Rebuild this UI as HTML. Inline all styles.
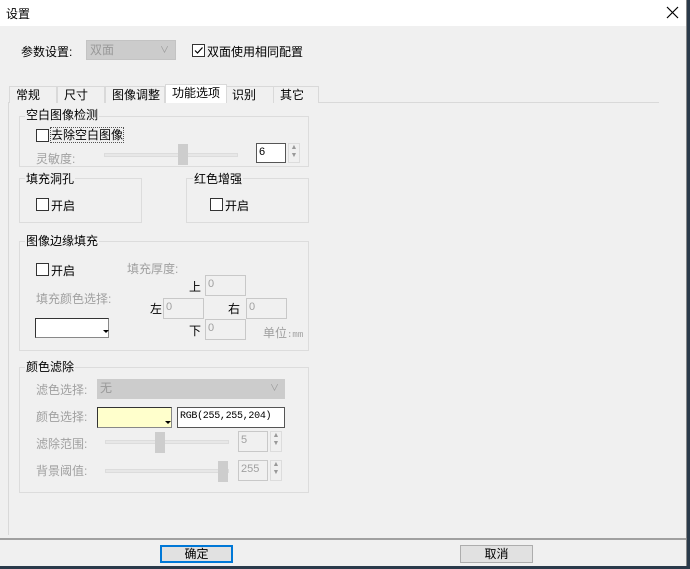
<!DOCTYPE html>
<html><head><meta charset="utf-8"><style>
*{box-sizing:border-box}
body{margin:0;width:690px;height:569px;background:#2a3a4a;font-family:"Liberation Sans","Noto Sans CJK SC",sans-serif;font-size:12px;color:#000;position:relative;overflow:hidden}
.a{position:absolute}
.win{left:0;top:0;width:687px;height:566px;background:#f0f0f0;border-right:1px solid #888}
.title{left:0;top:0;width:686px;height:26px;background:#fff}
.gb{position:absolute;border:1px solid #dcdcdc}
.gl{position:absolute;background:#f0f0f0;padding:0 1px;line-height:14px}
.cb{position:absolute;width:13px;height:13px;border:1px solid #333;background:#fff}
.dis{color:#a0a0a0}
.inp{position:absolute;border:1px solid #c8c8c8;background:#f0f0f0;color:#a0a0a0;font-size:11px;padding-left:2px;line-height:16px}
.tab{position:absolute;top:86px;height:17px;border:1px solid #d9d9d9;border-bottom:none;background:#f0f0f0;text-align:left;padding-left:6px;line-height:16px;font-size:12px}
.track{position:absolute;height:4px;border:1px solid #dcdcdc;background:#e7e7e7}
.thumb{position:absolute;width:10px;height:21px;background:#cdcdcd}
.spin{position:absolute;width:12px;border:1px solid #dcdcdc;background:#f0f0f0;font-size:7px;color:#999;text-align:center;line-height:8px}
.btn{position:absolute;top:545px;height:18px;border:1px solid #adadad;background:#e1e1e1;text-align:center;line-height:16px}
</style></head><body>
<div class="a win"></div>
<div class="a title"></div>
<div class="a" style="left:6px;top:5px;font-size:12px">设置</div>
<svg class="a" style="left:666px;top:6px" width="13" height="13"><path d="M1 1L12 12M12 1L1 12" stroke="#000" stroke-width="1.2"/></svg>

<div class="a" style="left:21px;top:43px">参数设置:</div>
<div class="a" style="left:86px;top:40px;width:90px;height:20px;background:#ccc;border:1px solid #c3c3c3;color:#999;padding-left:3px;line-height:18px">双面<span style="position:absolute;right:6px;top:0;font-size:9px">∨</span></div>
<div class="cb" style="left:192px;top:44px"></div>
<svg class="a" style="left:193px;top:45px" width="11" height="11"><path d="M2 5.5L4.5 8L9.5 2.5" stroke="#000" fill="none" stroke-width="1.2"/></svg>
<div class="a" style="left:207px;top:43px">双面使用相同配置</div>

<!-- tabs -->
<div class="a" style="left:8px;top:102px;width:651px;height:1px;background:#d9d9d9"></div>
<div class="a" style="left:8px;top:102px;width:1px;height:433px;background:#d9d9d9"></div>
<div class="tab" style="left:9px;width:48px">常规</div>
<div class="tab" style="left:57px;width:48px">尺寸</div>
<div class="tab" style="left:105px;width:60px">图像调整</div>
<div class="tab" style="left:226px;width:48px;padding-left:5px">识别</div>
<div class="tab" style="left:273px;width:46px">其它</div>
<div class="tab" style="left:165px;top:84px;height:19px;width:62px;background:#fff;line-height:17px">功能选项</div>

<!-- 空白图像检测 -->
<div class="gb" style="left:19px;top:116px;width:290px;height:51px"></div>
<div class="gl" style="left:25px;top:108px">空白图像检测</div>
<div class="cb" style="left:36px;top:129px"></div>
<div class="a" style="left:51px;top:128px;outline:1px dotted #555;line-height:14px">去除空白图像</div>
<div class="a dis" style="left:36px;top:150px">灵敏度:</div>
<div class="track" style="left:104px;top:153px;width:134px"></div>
<div class="thumb" style="left:178px;top:144px"></div>
<div class="a" style="left:256px;top:143px;width:30px;height:20px;border:1px solid #555;background:#fff;font-size:11px;padding-left:2px;line-height:17px">6</div>
<div class="spin" style="left:288px;top:143px;height:20px">▲<br>▼</div>

<!-- 填充洞孔 -->
<div class="gb" style="left:19px;top:178px;width:123px;height:45px"></div>
<div class="gl" style="left:25px;top:172px">填充洞孔</div>
<div class="cb" style="left:36px;top:198px"></div>
<div class="a" style="left:51px;top:197px">开启</div>
<div class="gb" style="left:186px;top:178px;width:123px;height:45px"></div>
<div class="gl" style="left:193px;top:172px">红色增强</div>
<div class="cb" style="left:210px;top:198px"></div>
<div class="a" style="left:225px;top:197px">开启</div>

<!-- 图像边缘填充 -->
<div class="gb" style="left:19px;top:241px;width:290px;height:110px"></div>
<div class="gl" style="left:25px;top:234px">图像边缘填充</div>
<div class="cb" style="left:36px;top:263px"></div>
<div class="a" style="left:51px;top:262px">开启</div>
<div class="a dis" style="left:127px;top:260px">填充厚度:</div>
<div class="a dis" style="left:36px;top:290px">填充颜色选择:</div>
<div class="a" style="left:35px;top:318px;width:74px;height:20px;background:#fff;border:1px solid #333;border-right-color:#888;border-bottom-color:#888"></div>
<div class="a" style="left:103px;top:330px;border:3px solid transparent;border-top:3px solid #000"></div>
<div class="a" style="left:189px;top:278px">上</div>
<div class="inp" style="left:205px;top:275px;width:41px;height:21px">0</div>
<div class="a" style="left:150px;top:300px">左</div>
<div class="inp" style="left:163px;top:298px;width:41px;height:21px">0</div>
<div class="a" style="left:228px;top:300px">右</div>
<div class="inp" style="left:246px;top:298px;width:41px;height:21px">0</div>
<div class="a" style="left:189px;top:322px">下</div>
<div class="inp" style="left:205px;top:319px;width:41px;height:21px">0</div>
<div class="a dis" style="left:263px;top:324px">单位<span style="font-size:9px;font-family:'Liberation Mono',monospace">:mm</span></div>

<!-- 颜色滤除 -->
<div class="gb" style="left:19px;top:367px;width:290px;height:126px"></div>
<div class="gl" style="left:25px;top:360px">颜色滤除</div>
<div class="a dis" style="left:36px;top:381px">滤色选择:</div>
<div class="a" style="left:97px;top:379px;width:188px;height:20px;background:#ccc;color:#999;padding-left:3px;line-height:19px">无<span style="position:absolute;right:6px;font-size:9px">∨</span></div>
<div class="a dis" style="left:36px;top:408px">颜色选择:</div>
<div class="a" style="left:97px;top:407px;width:75px;height:21px;background:#ffffcc;border:1px solid #333;border-right-color:#888;border-bottom-color:#888"></div>
<div class="a" style="left:165px;top:421px;border:3px solid transparent;border-top:3px solid #000"></div>
<div class="a" style="left:177px;top:407px;width:108px;height:21px;border:1px solid #555;background:#fff;font-family:'Liberation Mono',monospace;font-size:10px;letter-spacing:-0.3px;padding-left:2px;line-height:18px;white-space:nowrap;overflow:hidden">RGB(255,255,204)</div>
<div class="a dis" style="left:36px;top:435px">滤除范围:</div>
<div class="track" style="left:105px;top:440px;width:124px"></div>
<div class="thumb" style="left:155px;top:432px"></div>
<div class="inp" style="left:238px;top:431px;width:30px;height:21px">5</div>
<div class="spin" style="left:270px;top:431px;height:21px">▲<br>▼</div>
<div class="a dis" style="left:36px;top:462px">背景阈值:</div>
<div class="track" style="left:105px;top:469px;width:124px"></div>
<div class="thumb" style="left:218px;top:461px"></div>
<div class="inp" style="left:238px;top:460px;width:30px;height:21px">255</div>
<div class="spin" style="left:270px;top:460px;height:21px">▲<br>▼</div>

<div class="a" style="left:0;top:538px;width:686px;height:2px;background:#a0a0a0"></div>
<div class="btn" style="left:160px;width:73px;border:2px solid #0078d7;line-height:14px">确定</div>
<div class="btn" style="left:460px;width:73px">取消</div>
</body></html>
